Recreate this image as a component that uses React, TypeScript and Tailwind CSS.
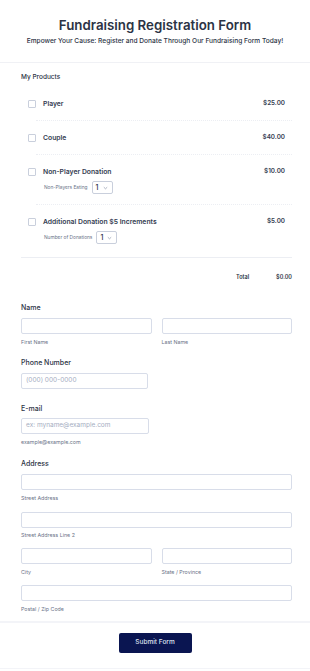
import React from "react";

const font = { fontFamily: "Inter, 'Liberation Sans', sans-serif" };

function Checkbox() {
  return <span className="block w-[8px] h-[8px] border border-[#c9cfdc] rounded-[1px] bg-white shrink-0" />;
}

function MiniSelect() {
  return (
    <span className="flex items-center justify-between w-[21px] h-[13px] border border-[#c9cfdc] rounded-[2px] bg-white px-[3px]">
      <span className="text-[7px] leading-none text-[#2c3345] font-medium">1</span>
      <svg width="5" height="4" viewBox="0 0 5 4" className="mr-[1px]">
        <path d="M0.8 1.2 L2.5 2.8 L4.2 1.2" fill="none" stroke="#8a93a8" strokeWidth="0.7" />
      </svg>
    </span>
  );
}

function Product({ name, price, sub, last }: { name: string; price: string; sub?: string; last?: boolean }) {
  return (
    <div>
      <div className="pt-[11px] pb-[10px] pl-[7px] pr-[7px]">
        <div className="flex items-center h-[12px]">
          <Checkbox />
          <span className="ml-[7px] text-[6.8px] font-semibold text-[#343c51] flex-1">{name}</span>
          <span className="text-[6.3px] font-semibold text-[#343c51]">{price}</span>
        </div>
        {sub && (
          <div className="flex items-center mt-[3px] ml-[16px]">
            <span className="text-[4.8px] text-[#6a7287] mr-[4px]">{sub}</span>
            <MiniSelect />
          </div>
        )}
      </div>
      {!last && <div className="ml-[15px] border-t border-dotted border-[#eceef3]" />}
    </div>
  );
}

function Input({ className = "", placeholder }: { className?: string; placeholder?: string }) {
  return (
    <div className={"h-[16px] border border-[#d8dde9] rounded-[2px] bg-white flex items-center px-[4px] " + className}>
      {placeholder && <span className="text-[6.5px] text-[#a5adbf]">{placeholder}</span>}
    </div>
  );
}

function Label({ children, className = "" }: { children: React.ReactNode; className?: string }) {
  return <div className={"text-[7px] leading-[10px] font-medium text-[#2c3345] " + className}>{children}</div>;
}

function Sub({ children, className = "" }: { children: React.ReactNode; className?: string }) {
  return <div className={"text-[5.3px] leading-[8px] text-[#6a7287] " + className}>{children}</div>;
}

export default function App() {
  return (
    <div style={font} className="w-[310px] h-[671px] bg-white overflow-hidden">
      <div className="pt-[15px] pb-[16px] text-center border-b border-[#f0f1f5]">
        <div className="text-[13.3px] leading-[20px] font-semibold text-[#2c3345]">Fundraising Registration Form</div>
        <div className="mt-[1px] text-[6.6px] leading-[10px] font-medium text-[#2c3345]">
          Empower Your Cause: Register and Donate Through Our Fundraising Form Today!
        </div>
      </div>

      <div className="pl-[21px] pr-[18px]">
        <div className="pt-[9px] text-[6.5px] leading-[10px] font-medium text-[#2c3345]">My Products</div>
        <div className="mt-[5px]">
          <Product name="Player" price="$25.00" />
          <Product name="Couple" price="$40.00" />
          <Product name="Non-Player Donation" price="$10.00" sub="Non-Players Eating" />
          <Product name="Additional Donation $5 Increments" price="$5.00" sub="Number of Donations" last />
        </div>
        <div className="border-t border-[#eceef3] mt-[3px]" />
        <div className="flex items-center h-[12px] mt-[13px] text-[5.5px] font-semibold text-[#2c3345]">
          <span className="ml-auto">Total</span>
          <span className="ml-[27px]">$0.00</span>
        </div>

        <Label className="mt-[20px]">Name</Label>
        <div className="grid grid-cols-2 gap-x-[10px] mt-[5px]">
          <div>
            <Input />
            <Sub className="mt-[4px]">First Name</Sub>
          </div>
          <div>
            <Input />
            <Sub className="mt-[4px]">Last Name</Sub>
          </div>
        </div>

        <Label className="mt-[12px]">Phone Number</Label>
        <Input className="mt-[5px] w-[127px]" placeholder="(000) 000-0000" />

        <Label className="mt-[15px]">E-mail</Label>
        <Input className="mt-[4px] w-[128px]" placeholder="ex: myname@example.com" />
        <Sub className="mt-[4px]">example@example.com</Sub>

        <Label className="mt-[13px]">Address</Label>
        <Input className="mt-[5px]" />
        <Sub className="mt-[4px]">Street Address</Sub>
        <Input className="mt-[10px]" />
        <Sub className="mt-[3px]">Street Address Line 2</Sub>
        <div className="grid grid-cols-2 gap-x-[10px] mt-[9px]">
          <div>
            <Input />
            <Sub className="mt-[4px]">City</Sub>
          </div>
          <div>
            <Input />
            <Sub className="mt-[4px]">State / Province</Sub>
          </div>
        </div>
        <Input className="mt-[9px]" />
        <Sub className="mt-[4px]">Postal / Zip Code</Sub>
      </div>

      <div className="mt-[8px] border-t-2 border-[#f3f4f8] pt-[10px] pb-[15px] flex justify-center border-b">
        <button className="w-[73px] h-[20px] bg-[#0a1551] rounded-[2px] text-[6.5px] font-medium text-[#dfe2ee]">
          Submit Form
        </button>
      </div>
    </div>
  );
}
